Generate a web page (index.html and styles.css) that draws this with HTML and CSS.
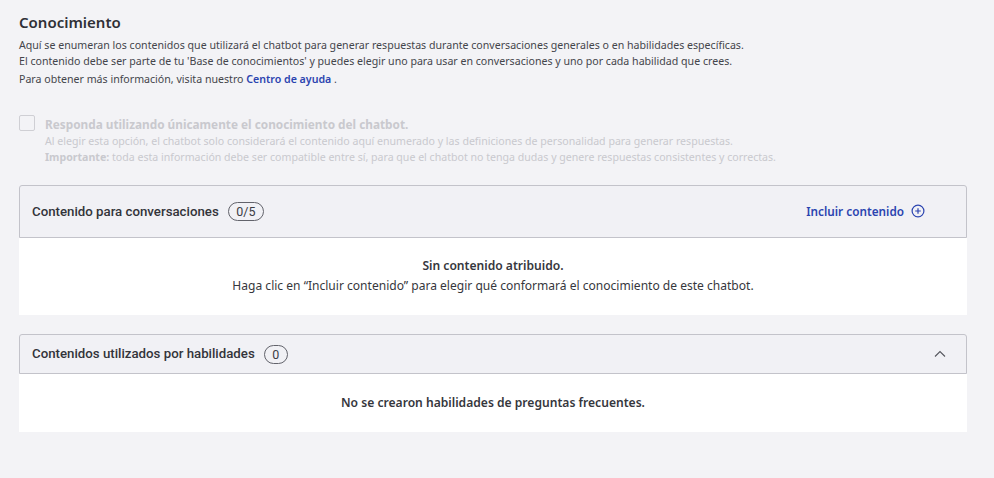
FILE: index.html
```html
<!DOCTYPE html>
<html lang="es">
<head>
<meta charset="utf-8">
<title>Conocimiento</title>
<link rel="stylesheet" href="styles.css">
</head>
<body>
<main class="page">
  <h1 class="title">Conocimiento</h1>
  <p class="intro">Aquí se enumeran los contenidos que utilizará el chatbot para generar respuestas durante conversaciones generales o en habilidades específicas.</p>
  <p class="intro">El contenido debe ser parte de tu 'Base de conocimientos' y puedes elegir uno para usar en conversaciones y uno por cada habilidad que crees.</p>
  <p class="intro intro-last">Para obtener más información, visita nuestro <a class="link" href="#">Centro de ayuda</a> .</p>

  <div class="option">
    <span class="checkbox"></span>
    <div class="option-text">
      <div class="option-label">Responda utilizando únicamente el conocimiento del chatbot.</div>
      <div class="option-desc">Al elegir esta opción, el chatbot solo considerará el contenido aquí enumerado y las definiciones de personalidad para generar respuestas.</div>
      <div class="option-desc"><b>Importante:</b> toda esta información debe ser compatible entre sí, para que el chatbot no tenga dudas y genere respuestas consistentes y correctas.</div>
    </div>
  </div>

  <section class="panel panel-first">
    <header class="panel-head head-tall">
      <h2 class="panel-title">Contenido para conversaciones</h2>
      <span class="pill">0/5</span>
      <a class="add" href="#">Incluir contenido
        <svg class="add-icon" viewBox="0 0 14 14" width="14" height="14" aria-hidden="true"><circle cx="7" cy="7" r="5.9"/><path d="M7 4.2v5.6M4.2 7h5.6"/></svg>
      </a>
    </header>
    <div class="panel-body body-first">
      <strong class="empty-title">Sin contenido atribuido.</strong>
      <span class="empty-text">Haga clic en “Incluir contenido” para elegir qué conformará el conocimiento de este chatbot.</span>
    </div>
  </section>

  <section class="panel">
    <header class="panel-head head-short">
      <h2 class="panel-title">Contenidos utilizados por habilidades</h2>
      <span class="pill">0</span>
      <svg class="chevron" viewBox="0 0 12 8" width="12" height="8" aria-hidden="true"><path d="M1 6.5 6 1.5l5 5"/></svg>
    </header>
    <div class="panel-body body-second">
      <strong class="empty-title">No se crearon habilidades de preguntas frecuentes.</strong>
    </div>
  </section>
</main>
</body>
</html>
```
FILE: styles.css
```css
* { box-sizing: border-box; }
html, body { margin: 0; padding: 0; }
body {
  width: 994px;
  height: 478px;
  overflow: hidden;
  background: #f3f3f6;
  color: #44454b;
  font-family: "Noto Sans", "Open Sans", sans-serif;
}
.page { padding: 13px 27px 0 19px; }
.title {
  margin: 0 0 6px;
  font-size: 15px;
  line-height: 18px;
  font-weight: 600;
  color: #2f3036;
}
.intro {
  margin: 0;
  font-size: 10.62px;
  line-height: 16px;
  white-space: nowrap;
}
.intro-last { margin-top: 2px; }
.link { color: #2b44b0; font-weight: 600; text-decoration: none; }
.option {
  display: flex;
  gap: 10px;
  margin-top: 28px;
}
.checkbox {
  flex: none;
  width: 16px;
  height: 16px;
  border: 1px solid #cfcfd4;
  border-radius: 2px;
}
.option-text { color: #c9c9ce; }
.option-label {
  font-size: 11.8px;
  line-height: 18px;
  font-weight: 700;
}
.option-desc {
  font-size: 10.6px;
  line-height: 16px;
  white-space: nowrap;
}
.option-desc b { font-weight: 700; }
.panel { margin-top: 19px; }
.panel-first { margin-top: 20px; }
.panel-head {
  display: flex;
  align-items: center;
  padding-left: 12px;
  border: 1px solid #c3c3ca;
  border-radius: 3px 3px 0 0;
  background: #f1f1f5;
}
.head-tall { height: 53px; }
.head-short { height: 40px; }
.panel-title {
  margin: 0;
  font-family: Roboto, "Noto Sans", sans-serif;
  font-size: 13.25px;
  line-height: 16px;
  font-weight: 500;
  color: #33343a;
}
.pill {
  margin-left: 9px;
  padding: 0 7.5px;
  height: 19px;
  border: 1px solid #62636b;
  border-radius: 10px;
  font-family: Roboto, "Noto Sans", sans-serif;
  font-size: 12.5px;
  line-height: 17px;
  color: #3d3e45;
}
.add {
  display: flex;
  align-items: center;
  gap: 7px;
  margin-left: auto;
  margin-right: 41px;
  margin-bottom: 2px;
  font-size: 11.75px;
  font-weight: 600;
  color: #2b44b0;
  text-decoration: none;
}
.add-icon { fill: none; stroke: #2b44b0; stroke-width: 1.2; }
.chevron {
  margin-left: auto;
  margin-right: 20px;
  fill: none;
  stroke: #55565d;
  stroke-width: 1.1;
}
.panel-body {
  display: flex;
  flex-direction: column;
  align-items: center;
  background: #fff;
  color: #36373d;
  font-size: 12.05px;
  line-height: 19px;
}
.body-first { height: 77px; padding-top: 18px; }
.body-second { height: 58px; padding-top: 19px; }
.empty-title { margin-bottom: 1px; font-size: 12.1px; font-weight: 600; }
```
